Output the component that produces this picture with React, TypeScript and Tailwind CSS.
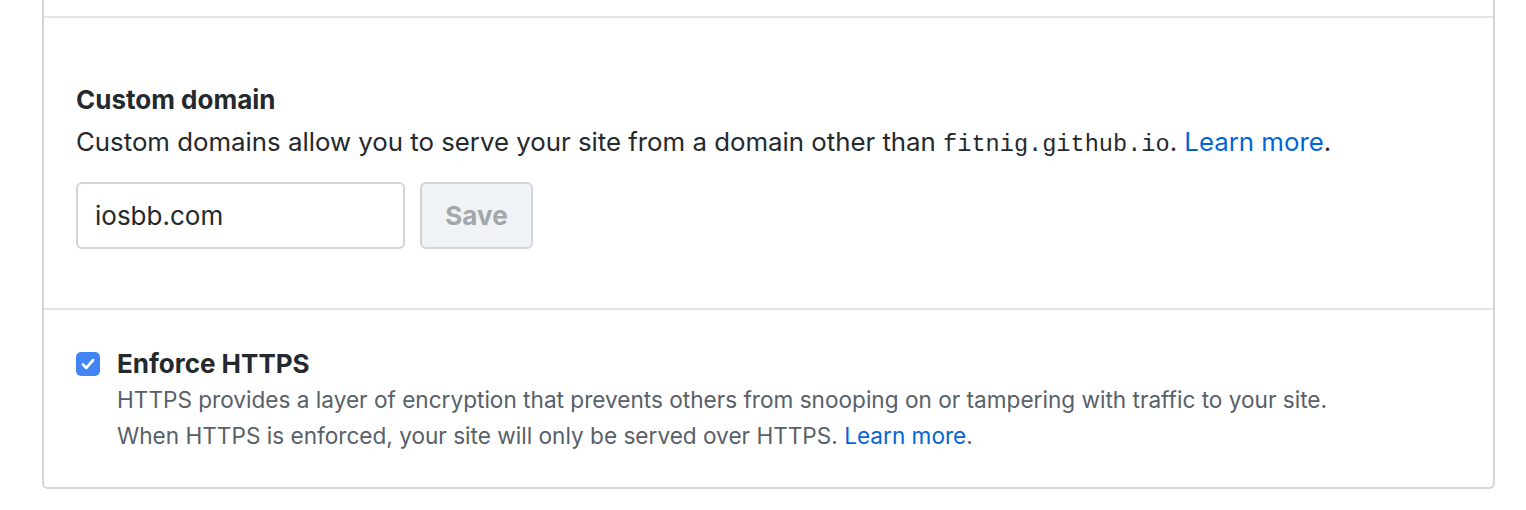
import React from 'react';

const sans = 'font-["Inter","Liberation_Sans",sans-serif]';

export default function App() {
  return (
    <div className={`w-[1526px] h-[510px] bg-white pl-[42px] ${sans}`}>
      <div className="w-[1453px] border-x-2 border-b-2 border-[#d1d5da] rounded-b-[6px]">
        <div className="h-[18px] border-b-2 border-[#e1e4e8]" />

        <div className="px-[32px] pt-[62px] pb-[59px] border-b-2 border-[#e1e4e8]">
          <h3 className="text-[26px] leading-[40px] font-bold text-[#24292e]">Custom domain</h3>
          <p className="mt-[2px] text-[25.8px] leading-[40px] text-[#24292e]">
            Custom domains allow you to serve your site from a domain other than{' '}
            <code className='font-["Liberation_Mono",monospace] text-[23.6px] leading-none'>fitnig.github.io</code>.{' '}
            <a className="text-[#0366d6]">Learn more</a>.
          </p>
          <div className="flex gap-[15px] mt-[20px]">
            <input
              defaultValue="iosbb.com"
              className="w-[329px] h-[67px] border-2 border-[#d1d5da] rounded-[6px] px-[17px] text-[26px] text-[#24292e] outline-none"
            />
            <button
              disabled
              className="w-[113px] h-[67px] border-2 border-[#d1d5da] rounded-[6px] bg-[#eff3f6] text-[26px] font-bold text-[#a3a7ab]"
            >
              Save
            </button>
          </div>
        </div>

        <div className="px-[32px] pt-[36px] pb-[33px] flex gap-[17px]">
          <div className="mt-[6px] w-[24px] h-[24px] rounded-[5px] bg-[#4185f4] flex items-center justify-center shrink-0">
            <svg width="18" height="18" viewBox="0 0 16 16" fill="none">
              <path d="M3.5 8.5 L6.5 11.5 L12.5 4.5" stroke="white" strokeWidth="2.4" strokeLinecap="round" strokeLinejoin="round" />
            </svg>
          </div>
          <div>
            <div className="text-[26px] leading-[36px] font-bold text-[#24292e]">Enforce HTTPS</div>
            <p className="text-[22.6px] leading-[36px] text-[#586069]">
              HTTPS provides a layer of encryption that prevents others from snooping on or tampering with traffic to your site.
              <br />
              When HTTPS is enforced, your site will only be served over HTTPS.{' '}
              <a className="text-[#0366d6]">Learn more</a>.
            </p>
          </div>
        </div>
      </div>
    </div>
  );
}
